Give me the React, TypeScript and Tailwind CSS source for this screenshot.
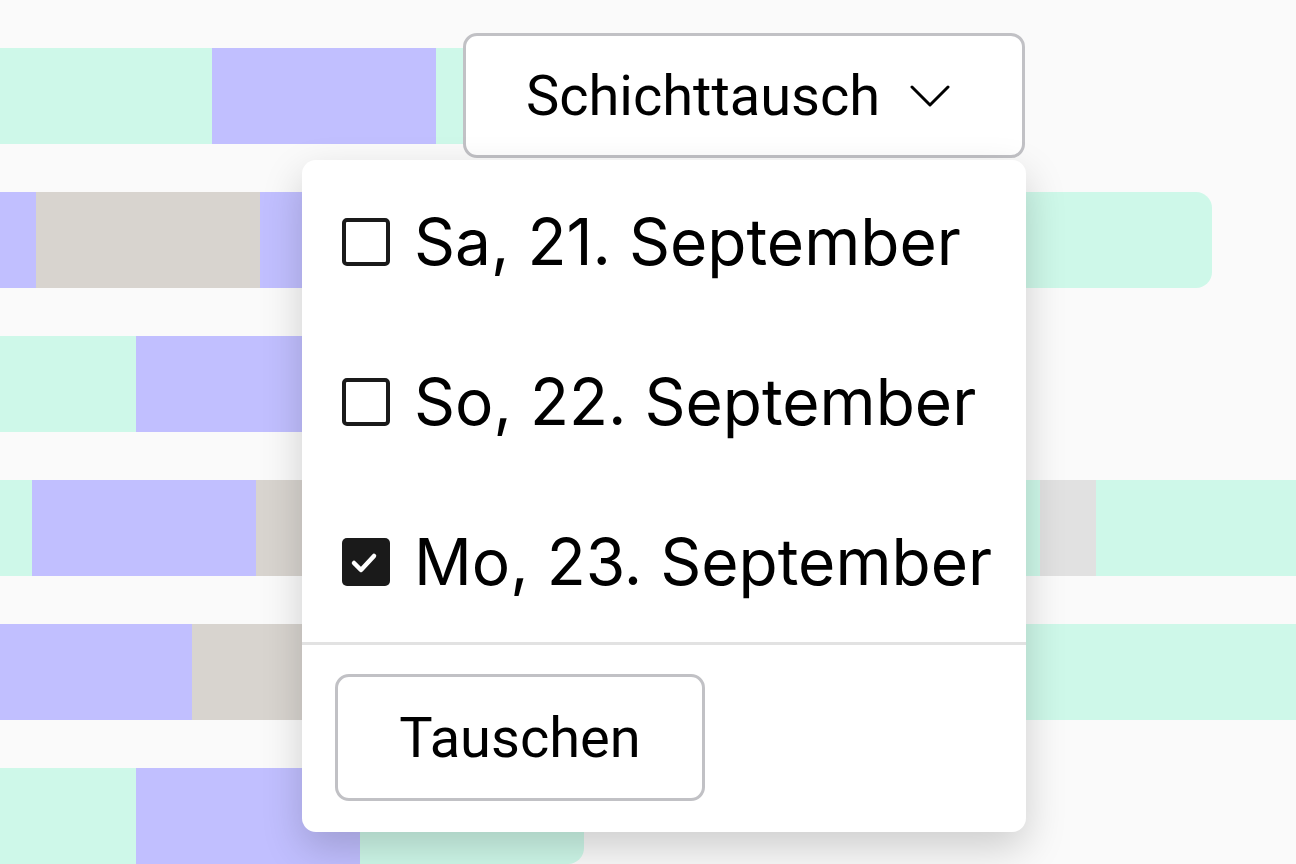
import React from "react";

const MINT = "bg-[#cef8e9]";
const LAV = "bg-[#c1bfff]";
const BEIGE = "bg-[#d8d4cf]";
const GRAY = "bg-[#e1e1e1]";

function Seg({ w, c, last }: { w: number; c: string; last?: boolean }) {
  return <div className={`${c} h-full shrink-0 ${last ? "rounded-r-[16px]" : ""}`} style={{ width: w }} />;
}

function Box({ checked }: { checked?: boolean }) {
  if (checked) {
    return (
      <div className="w-[48px] h-[48px] rounded-[5px] bg-[#1a1a1a] flex items-center justify-center shrink-0">
        <svg width="48" height="48" viewBox="0 0 48 48" fill="none" stroke="white" strokeWidth="4.5" strokeLinecap="round" strokeLinejoin="round">
          <path d="M12 25l7 7L32 18" />
        </svg>
      </div>
    );
  }
  return <div className="w-[48px] h-[48px] rounded-[5px] border-[4px] border-[#1a1a1a] bg-white shrink-0" />;
}

export default function App() {
  const items = [
    { label: "Sa, 21. September", checked: false },
    { label: "So, 22. September", checked: false },
    { label: "Mo, 23. September", checked: true },
  ];
  return (
    <div className="relative w-[1296px] h-[864px] overflow-hidden bg-[#fafafa] font-['Roboto',sans-serif] text-black">
      <div className="flex flex-col gap-[48px] pt-[48px]">
        <div className="flex h-[96px]">
          <Seg w={212} c={MINT} />
          <Seg w={224} c={LAV} />
          <Seg w={224} c={MINT} last />
        </div>
        <div className="flex h-[96px]">
          <Seg w={36} c={LAV} />
          <Seg w={224} c={BEIGE} />
          <Seg w={224} c={LAV} />
          <Seg w={728} c={MINT} last />
        </div>
        <div className="flex h-[96px]">
          <Seg w={136} c={MINT} />
          <Seg w={224} c={LAV} />
          <Seg w={224} c={MINT} last />
        </div>
        <div className="flex h-[96px]">
          <Seg w={32} c={MINT} />
          <Seg w={224} c={LAV} />
          <Seg w={224} c={BEIGE} />
          <Seg w={560} c={MINT} />
          <Seg w={56} c={GRAY} />
          <Seg w={200} c={MINT} />
        </div>
        <div className="flex h-[96px]">
          <Seg w={192} c={LAV} />
          <Seg w={224} c={BEIGE} />
          <Seg w={880} c={MINT} />
        </div>
        <div className="flex h-[96px]">
          <Seg w={136} c={MINT} />
          <Seg w={224} c={LAV} />
          <Seg w={224} c={MINT} last />
        </div>
      </div>

      <button className="absolute left-[463px] top-[33px] w-[562px] h-[125px] bg-white border-[3px] border-[#c1c1c5] rounded-[14px] flex items-center justify-center gap-[30px] pr-[12px] text-[56px] leading-none">
        <span>Schichttausch</span>
        <svg width="40" height="24" viewBox="0 0 40 24" fill="none" stroke="black" strokeWidth="3" strokeLinecap="round" strokeLinejoin="round">
          <path d="M2 3l18 18L38 3" />
        </svg>
      </button>

      <div className="absolute left-[302px] top-[160px] w-[724px] h-[672px] bg-white rounded-[14px] shadow-[0_16px_40px_rgba(0,0,0,0.18)] flex flex-col">
        <div className="flex flex-col pt-[2px]">
          {items.map((it) => (
            <div key={it.label} className="h-[160px] flex items-center gap-[24px] pl-[40px]">
              <Box checked={it.checked} />
              <span className="text-[64px] leading-none font-['Inter',sans-serif]">{it.label}</span>
            </div>
          ))}
        </div>
        <div className="h-[3px] bg-[#e2e2e2]" />
        <div className="pt-[29px] pl-[33px]">
          <button className="w-[370px] h-[127px] border-[3px] border-[#c1c1c5] rounded-[14px] bg-white text-[56px] leading-none flex items-center justify-center">
            Tauschen
          </button>
        </div>
      </div>
    </div>
  );
}
